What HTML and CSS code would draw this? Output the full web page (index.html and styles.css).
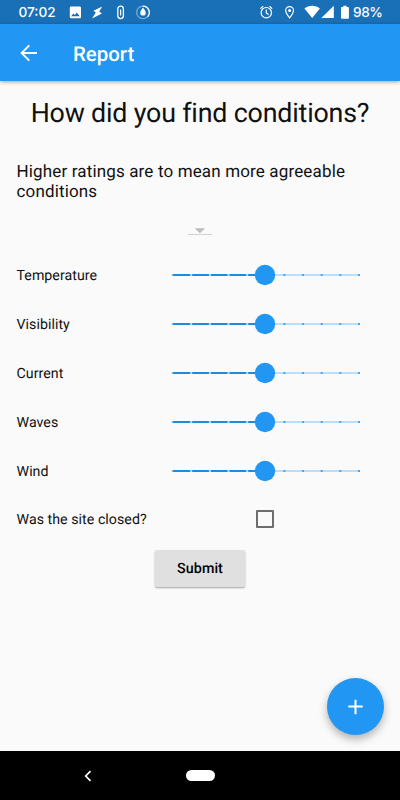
FILE: index.html
```html
<!DOCTYPE html>
<html lang="en">
<head>
  <meta charset="UTF-8">
  <meta name="viewport" content="width=device-width, initial-scale=1.0">
  <title>Report</title>
  <link rel="stylesheet" href="styles.css">
</head>
<body>
  <!-- shared slider shape, 10 divisions, value 5 -->
  <svg class="defs" width="0" height="0">
    <symbol id="slider" viewBox="0 0 190 22">
      <path d="M1 11H189" stroke="#bbdefb" stroke-width="2"/>
      <path d="M1 11H95" stroke="#1c8be0" stroke-width="2"/>
      <path d="M19.2 11h2M37.9 11h2M56.5 11h2M75.2 11h2" stroke="#b5dbfb" stroke-width="2"/>
      <path d="M112.4 11h2M131.1 11h2M149.7 11h2M168.3 11h2M187 11h2" stroke="#4ba3ea" stroke-width="2"/>
      <path d="M.8 11h1.4" stroke="#7dbdf2" stroke-width="2"/>
      <circle cx="94" cy="11" r="10.2" fill="#2196f3"/>
    </symbol>
  </svg>

  <div class="screen">
    <div class="status-bar">
      <span class="time">07:02</span>
      <svg class="notifications" width="84" height="24" viewBox="68 0 84 24">
        <path fill="#fff" fill-rule="evenodd" d="M71 6.6h8.800q1.200 0 1.200 1.200v9.200q0 1.200-1.200 1.200H71q-1.200 0-1.200-1.200V7.800q0-1.200 1.200-1.200zM71.200 16.200h8.400l-2.700-3.800-2.100 2.700-1.500-1.700z"/>
        <path fill="#fff" d="M102.200 6.500l-8.700 4.200 2.300 1.700-3.700 6.200 9.800-5.200-2.700-1.900z"/>
        <rect x="117.800" y="6.200" width="5.600" height="12.400" rx="2.800" fill="none" stroke="#fff" stroke-width="1.300"/>
        <path d="M120.600 9.500v6" stroke="#fff" stroke-width="1.200"/>
        <circle cx="143" cy="12.400" r="6.300" fill="none" stroke="#78b1dc" stroke-width="1.200"/>
        <path d="M143 6.100a6.300 6.300 0 0 1 4.500 10.700" fill="none" stroke="#fff" stroke-width="1.200"/>
        <path d="M143 7.600c1.400 2 2.700 3.400 2.700 5.300a2.700 2.700 0 0 1-5.400 0c0-1.900 1.300-3.300 2.700-5.300z" fill="#fff"/>
      </svg>
      <svg class="system" width="92" height="24" viewBox="258 0 92 24">
        <g fill="none" stroke="#fff" stroke-width="1.200">
          <circle cx="266.300" cy="12.700" r="5.200"/>
          <path d="M266.300 9.400v3.600l2.300 1.600M260.400 8.600l2.700-2.300M272.200 8.600l-2.700-2.300"/>
          <path d="M289.600 17.800c-2.500-3-3.900-5-3.900-7.300a3.900 3.900 0 0 1 7.800 0c0 2.300-1.400 4.300-3.900 7.300z"/>
        </g>
        <circle cx="289.600" cy="10.400" r="1.500" fill="#fff"/>
        <path fill="#fff" d="M304.400 8.400c4.500-3.400 11-3.400 15.500 0L312.200 18zM333.800 5.700V18h-12.500z"/>
        <path fill="#fff" d="M343.300 5.700h3.200v1.200h1.500q.9 0 .9.900v10q0 .9-.9.900h-6.100q-.9 0-.9-.9v-10q0-.9.900-.9h1.400z"/>
      </svg>
      <span class="battery">98%</span>
    </div>

    <header class="app-bar">
      <svg class="back" width="18" height="18" viewBox="0 0 18 18">
        <path d="M17 9H2M9.300 1.300L1.600 9l7.700 7.700" fill="none" stroke="#fff" stroke-width="1.900"/>
      </svg>
      <span class="title">Report</span>
    </header>

    <main class="content">
      <h1>How did you find conditions?</h1>
      <p class="hint">Higher ratings are to mean more agreeable conditions</p>

      <div class="dropdown">
        <svg width="24" height="10" viewBox="0 0 24 10">
          <path d="M6.600 1.200h10.600l-5.300 5z" fill="#bdbdbd"/>
          <path d="M0 7.500h24" stroke="#d0d0d0" stroke-width="1"/>
        </svg>
      </div>

      <div class="row">
        <span class="label">Temperature</span>
        <svg class="slider"><use href="#slider"/></svg>
      </div>
      <div class="row">
        <span class="label">Visibility</span>
        <svg class="slider"><use href="#slider"/></svg>
      </div>
      <div class="row">
        <span class="label">Current</span>
        <svg class="slider"><use href="#slider"/></svg>
      </div>
      <div class="row">
        <span class="label">Waves</span>
        <svg class="slider"><use href="#slider"/></svg>
      </div>
      <div class="row">
        <span class="label">Wind</span>
        <svg class="slider"><use href="#slider"/></svg>
      </div>
      <div class="row">
        <span class="label">Was the site closed?</span>
        <span class="checkbox"></span>
      </div>

      <button class="submit">Submit</button>
    </main>

    <button class="fab">
      <svg width="16" height="16" viewBox="0 0 16 16">
        <path d="M7.500 .8v14.400M.3 7.500h14.400" stroke="#fff" stroke-width="2"/>
      </svg>
    </button>

    <div class="nav-bar">
      <svg class="nav-back" width="8" height="12" viewBox="0 0 8 12">
        <path d="M6.500 1.200L1.700 6l4.800 4.800" fill="none" stroke="#fff" stroke-width="1.700"/>
      </svg>
      <span class="nav-home"></span>
    </div>
  </div>
</body>
</html>
```
FILE: styles.css
```css
* {
  box-sizing: border-box;
}

body {
  margin: 0;
  font-family: Roboto, sans-serif;
  color: #111;
  background: #fafafa;
  text-rendering: geometricPrecision;
}

.defs {
  position: absolute;
}

.screen {
  position: relative;
  display: flex;
  flex-direction: column;
  width: 400px;
  height: 800px;
  overflow: hidden;
}

.status-bar {
  display: flex;
  align-items: center;
  height: 24px;
  padding-left: 18.5px;
  background: #1a70b7;
  color: #fff;
  font-family: Inter, sans-serif;
  font-size: 13.6px;
  font-weight: 500;
  line-height: 24px;
}

.time {
  width: 49.5px;
  padding-top: 2px;
}

.notifications,
.time,
.system {
  flex-shrink: 0;
}

.system {
  margin-left: 106px;
}

.battery {
  margin-left: 3px;
  padding-top: 2px;
  letter-spacing: -0.4px;
}

.app-bar {
  display: flex;
  align-items: center;
  height: 57px;
  padding-left: 20px;
  background: #2196f3;
  color: #fff;
  box-shadow: 0 1px 4px rgba(0, 0, 0, 0.35);
  z-index: 1;
}

.title {
  margin-left: 35px;
  padding-top: 2px;
  font-size: 20.4px;
  font-weight: 500;
}

.content {
  flex: 1;
  display: flex;
  flex-direction: column;
  padding: 16px 16.5px 0;
}

h1 {
  margin: 0;
  font-size: 26.8px;
  font-weight: 400;
  line-height: 32px;
  letter-spacing: -0.18px;
  text-align: center;
  white-space: nowrap;
}

.hint {
  margin: 33px 0 0;
  font-size: 17px;
  line-height: 20.4px;
  letter-spacing: 0.15px;
}

.dropdown {
  height: 48px;
  padding-top: 24px;
  text-align: center;
  line-height: 0;
}

.row {
  display: flex;
  align-items: center;
  height: 48.85px;
}

.label {
  width: 154.500px;
  padding-top: 2px;
  font-size: 14.2px;
  letter-spacing: 0.04px;
}

.slider {
  width: 190px;
  height: 22px;
}

.checkbox {
  width: 18px;
  height: 18px;
  margin-left: 85px;
  border: 2px solid #6e6e6e;
  border-radius: 1px;
}

.submit {
  align-self: center;
  width: 90px;
  height: 37px;
  margin-top: 6px;
  padding: 2px 0 0;
  border: 0;
  border-radius: 2px;
  background: #e0e0e0;
  color: #000;
  font-family: inherit;
  font-size: 14.3px;
  font-weight: 500;
  letter-spacing: 0.05px;
  text-rendering: inherit;
  box-shadow: 0 1px 2px rgba(0, 0, 0, 0.35);
}

.fab {
  position: absolute;
  right: 16px;
  bottom: 65px;
  display: flex;
  align-items: center;
  justify-content: center;
  width: 57px;
  height: 57px;
  padding: 0;
  border: 0;
  border-radius: 50%;
  background: #2196f3;
  box-shadow: 0 4px 8px rgba(0, 0, 0, 0.3);
}

.nav-bar {
  display: flex;
  align-items: center;
  height: 49px;
  padding-left: 84px;
  background: #000;
  z-index: 1;
}

.nav-home {
  width: 29px;
  height: 11px;
  margin-left: 94px;
  border-radius: 6px;
  background: #fff;
}
```
